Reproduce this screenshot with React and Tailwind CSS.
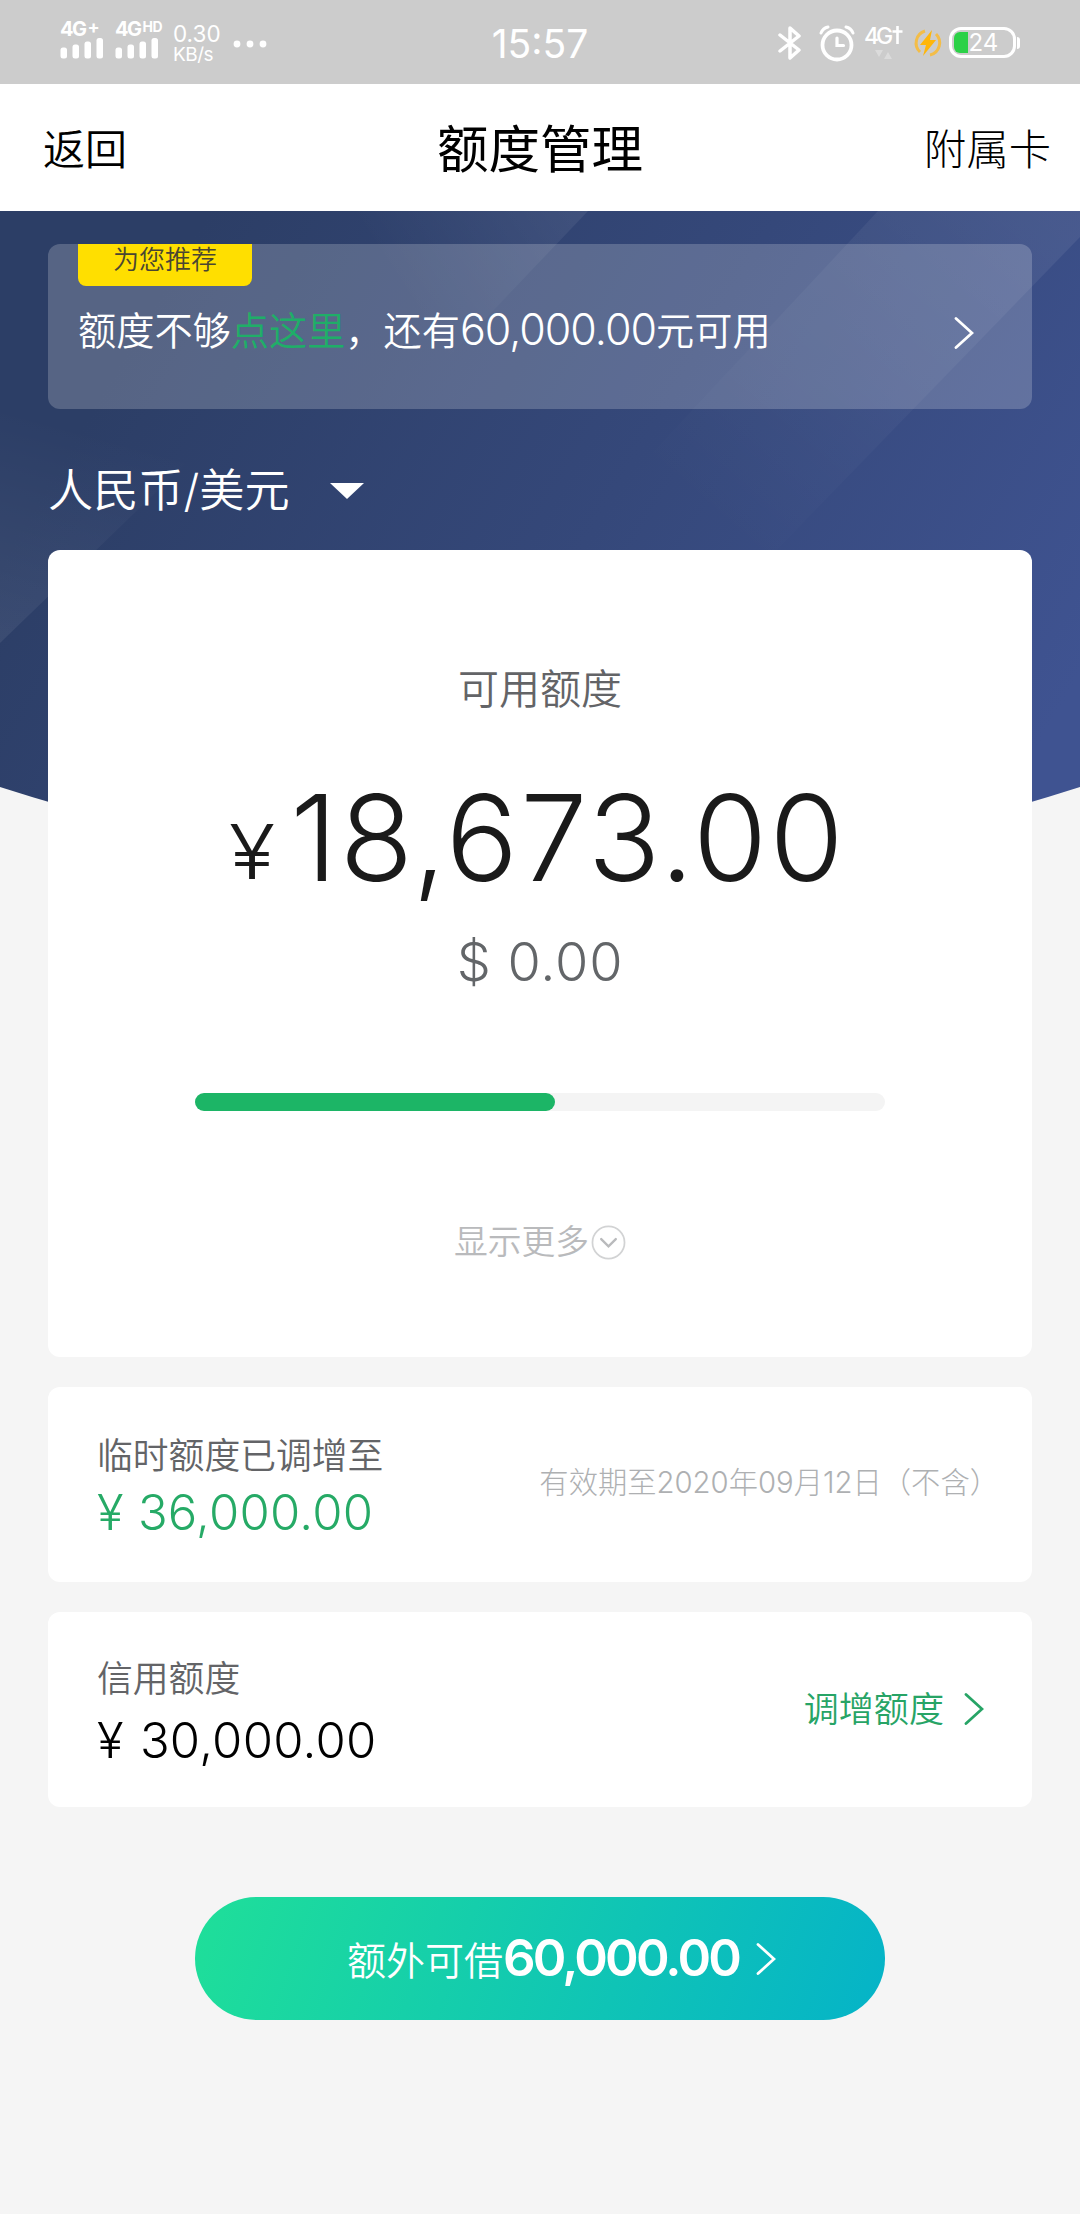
import React from 'react';

const Chevron = ({ className, width = 2.8 }) => (
  <svg className={className} viewBox="0 0 20 32" fill="none">
    <path d="M2 1.5 L18 16 L2 30.5" stroke="currentColor" strokeWidth={width} strokeLinecap="round" strokeLinejoin="miter" />
  </svg>
);

const Signal = () => (
  <svg className="h-[21px] w-[44px]" viewBox="0 0 44 21" fill="currentColor">
    <rect x="0.5" y="9.5" width="6.5" height="11" rx="2.5" />
    <rect x="12.5" y="6.5" width="6.5" height="14" rx="2.5" />
    <rect x="24.5" y="3.5" width="6.5" height="17" rx="2.5" />
    <rect x="36.5" y="0" width="6.5" height="20.5" rx="2.5" />
  </svg>
);

const StatusBar = () => (
  <div className="h-[84px] bg-[#cccccc] px-[60px] text-white flex items-start">
    <div className="flex flex-1 items-start">
      <div className="mt-[21px] w-[55px]">
        <div className="h-[17px] text-[20px] leading-[17px] font-bold tracking-[-1.5px] flex">
          4G<span className="ml-[2px] text-[18px] leading-[11px]">+</span>
        </div>
        <Signal />
      </div>
      <div className="mt-[21px] w-[58px]">
        <div className="h-[17px] text-[20px] leading-[17px] font-bold tracking-[-1.5px] flex">
          4G<span className="ml-[2px] text-[14px] leading-[12px] tracking-[-0.5px]">HD</span>
        </div>
        <Signal />
      </div>
      <div className="mt-[23px]">
        <div className="text-[22.5px] leading-[22px]">0.30</div>
        <div className="text-[19px] leading-[19px] tracking-[-0.5px]">KB/s</div>
      </div>
      <svg className="ml-[12px] mt-[40px] h-[8px] w-[34px]" viewBox="0 0 34 8" fill="currentColor">
        <circle cx="4" cy="4" r="3.4" />
        <circle cx="17" cy="4" r="3.4" />
        <circle cx="30" cy="4" r="3.4" />
      </svg>
    </div>
    <div className="mt-[24px] text-[39px] leading-[40px]">15:57</div>
    <div className="flex flex-1 items-start justify-end">
      <svg className="mt-[25px] h-[36px] w-[24px]" viewBox="0 0 24 36" fill="none" stroke="currentColor" strokeWidth="3.5" strokeLinejoin="round" strokeLinecap="round">
        <path d="M2 10 L21 25 L12 33 V3 L21 11 L2 26" />
      </svg>
      <svg className="ml-[17px] mt-[25px] h-[37px] w-[36px]" viewBox="0 0 36 37" fill="none" stroke="currentColor" strokeLinecap="round">
        <circle cx="18" cy="20" r="14.5" strokeWidth="3.8" />
        <path d="M18 13 V20.5 H24.5" strokeWidth="3.2" />
        <path d="M2 8 Q4 3 9 2 M34 8 Q32 3 27 2" strokeWidth="3" />
      </svg>
      <div className="ml-[9px] mt-[25px] w-[49px]">
        <div className="flex text-[23px] leading-[22px] font-medium tracking-[-3px]">
          4G
          <svg className="ml-[2px] mt-[1px] h-[19px] w-[11px]" viewBox="0 0 11 19" fill="none" stroke="currentColor" strokeWidth="2.6">
            <path d="M5.5 0 V18 M0.5 5.5 H10.5" />
          </svg>
        </div>
        <svg className="ml-[11px] mt-[3px] h-[9px] w-[17px] opacity-30" viewBox="0 0 17 9" fill="currentColor">
          <path d="M0 0 H8 L4 7Z M9 9 H17 L13 2Z" />
        </svg>
      </div>
      <svg className="mt-[27px] h-[32px] w-[30px]" viewBox="0 0 30 32" fill="none">
        <path d="M19 3 L7 18 H13 L10 29 L23 13 H17 Z" fill="#ffb60a" />
        <path d="M7 25 A12.5 12.5 0 0 1 12 4 M23 7 A12.5 12.5 0 0 1 17 28" stroke="#f3bd48" strokeWidth="3" />
      </svg>
      <div className="ml-[6px] mt-[27px] flex h-[31px] items-center">
        <div className="flex h-[31px] w-[67px] items-center rounded-[12px] border-[3px] border-white p-[1.5px]">
          <div className="h-[21px] w-[14px] rounded-l-[6px] bg-[#2bd147]"></div>
          <div className="ml-[1px] text-[24px] leading-[22px]">24</div>
        </div>
        <div className="ml-px h-[12px] w-[3px] rounded-r bg-white"></div>
      </div>
    </div>
  </div>
);

const NavBar = () => (
  <header className="h-[127px] bg-white pt-[4px] text-black flex items-center justify-between pl-[43px] pr-[29px]">
    <div className="w-[200px] text-[42px] font-[350]">返回</div>
    <h1 className="text-[51.5px] font-normal">额度管理</h1>
    <div className="w-[214px] text-right text-[42.3px] font-light">附属卡</div>
  </header>
);

// Blue backdrop with diagonal light bands and a curved lower edge
const Backdrop = () => (
  <svg className="absolute inset-x-0 top-0 h-[680px] w-full" viewBox="0 0 1080 680" preserveAspectRatio="none">
    <defs>
      <linearGradient id="base" gradientUnits="userSpaceOnUse" x1="150" y1="100" x2="1000" y2="600">
        <stop offset="0" stopColor="#2c3e66" />
        <stop offset="0.5" stopColor="#35487a" />
        <stop offset="1" stopColor="#3f5391" />
      </linearGradient>
      <linearGradient id="band" gradientUnits="userSpaceOnUse" x1="588" y1="0" x2="420" y2="110">
        <stop offset="0" stopColor="#fff" stopOpacity="0.07" />
        <stop offset="1" stopColor="#fff" stopOpacity="0" />
      </linearGradient>
      <linearGradient id="band2" gradientUnits="userSpaceOnUse" x1="1040" y1="0" x2="740" y2="340">
        <stop offset="0" stopColor="#fff" stopOpacity="0.07" />
        <stop offset="1" stopColor="#fff" stopOpacity="0" />
      </linearGradient>
      <linearGradient id="band3" gradientUnits="userSpaceOnUse" x1="0" y1="430" x2="60" y2="210">
        <stop offset="0" stopColor="#fff" stopOpacity="0.07" />
        <stop offset="1" stopColor="#fff" stopOpacity="0" />
      </linearGradient>
      <clipPath id="curve">
        <path d="M0 0 H1080 V576 Q540 750 0 576 Z" />
      </clipPath>
    </defs>
    <g clipPath="url(#curve)">
      <rect width="1080" height="680" fill="url(#base)" />
      <path d="M300 0 H588 L388 210 H100 Z" fill="url(#band)" />
      <path d="M878 0 H1080 V26 L640 480 H430 Z" fill="url(#band2)" />
      <path d="M0 200 H240 L0 432 Z" fill="url(#band3)" />
    </g>
  </svg>
);

const Recommend = () => (
  <div className="h-[165px] rounded-xl bg-white/20 px-[30px]">
    <div className="h-[42px] w-[174px] overflow-hidden rounded-b-lg bg-[#ffdf00] text-center text-[26px] leading-[32px] text-[#4a4632]">为您推荐</div>
    <div className="flex items-center justify-between pr-[28px]">
      <p className="mt-[16px] text-[38.2px] leading-[54px]">
        额度不够<span className="text-[#1fae68]">点这里</span>，还有<span className="text-[43px] tracking-[-1px]">60,000.00</span>元可用
      </p>
      <Chevron className="mt-[22px] h-[32px] w-[20px]" />
    </div>
  </div>
);

const MainCard = () => (
  <section className="mt-[27px] h-[807px] rounded-xl bg-white flex flex-col items-center">
    <div className="mt-[109px] text-[41px] leading-[60px] text-[#636467]">可用额度</div>
    <div className="mt-[49px] flex h-[140px] items-baseline text-[#1a1a1a] leading-[140px]">
      <span className="relative -top-[2px] origin-right scale-x-112 text-[76px] font-light">¥</span>
      <span className="ml-[15px] text-[120px] font-light tracking-[2.3px]">18,673.00</span>
    </div>
    <div className="mt-[22px] text-[54px] leading-[64px] font-light tracking-[0.8px] text-[#636669]">$ 0.00</div>
    <div className="mt-[99px] h-[18px] w-[690px] rounded-full bg-[#f4f4f4]">
      <div className="h-full w-[360px] rounded-full bg-[#1cb566]"></div>
    </div>
    <div className="mt-[106px] flex items-center text-[33.8px] leading-[50px] text-[#b9babc]">
      显示更多
      <svg className="ml-[2px] h-[35px] w-[35px]" viewBox="0 0 36 36" fill="none" stroke="currentColor" strokeLinecap="round">
        <circle cx="18" cy="18" r="16.5" strokeWidth="1.8" stroke="#d2d3d4" />
        <path d="M10.5 14.5 L18 22 L25.5 14.5" strokeWidth="2.4" />
      </svg>
    </div>
  </section>
);

const LimitRow = ({ label, amount, className, children }) => (
  <section className="mt-[30px] flex h-[195px] items-center justify-between rounded-xl bg-white pl-[49px] pr-[48px]">
    <div className="pt-[5px]">
      <div className="text-[35.8px] leading-[50px] text-[#636467]">{label}</div>
      <div className={`text-[49px] leading-[60px] font-light tracking-[0.3px] ${className}`}>¥ {amount}</div>
    </div>
    {children}
  </section>
);

export default function App() {
  return (
    <div className="h-[2214px] w-[1080px] overflow-hidden bg-[#f5f5f5] font-['Inter','Noto_Sans_CJK_SC',sans-serif]">
      <StatusBar />
      <NavBar />
      <main className="relative">
        <Backdrop />
        <div className="relative px-[48px] pt-[33px] text-white font-[350]">
          <Recommend />
          <div className="mt-[49px] flex h-[65px] items-center text-[45.2px]">
            人民币/美元
            <svg className="ml-[40px] h-[16px] w-[34px]" viewBox="0 0 34 16" fill="currentColor">
              <path d="M0 0 H34 L17 16 Z" />
            </svg>
          </div>
          <MainCard />
          <LimitRow label="临时额度已调增至" amount="36,000.00" className="pt-[2px] text-[#26aa66]">
            <div className="-mr-[15px] mb-[4px] text-[29.3px] font-light text-[#aeb0b2]">有效期至2020年09月12日（不含）</div>
          </LimitRow>
          <LimitRow label="信用额度" amount="30,000.00" className="pt-[7px] [word-spacing:2px] text-black">
            <div className="flex items-center text-[35.1px] text-[#27a466]">
              调增额度
              <Chevron className="ml-[20px] h-[32px] w-[20px]" />
            </div>
          </LimitRow>
          <button className="mx-auto mt-[90px] flex h-[123px] w-[690px] items-center justify-center rounded-full bg-linear-[110deg,#1fdf99,#05b3c8] pl-[43px]">
            <span className="pt-[6px] text-[39px]">额外可借</span>
            <span className="text-[51px] font-semibold tracking-[-2.8px]">60,000.00</span>
            <Chevron className="ml-[17px] h-[32px] w-[20px]" />
          </button>
        </div>
      </main>
    </div>
  );
}
